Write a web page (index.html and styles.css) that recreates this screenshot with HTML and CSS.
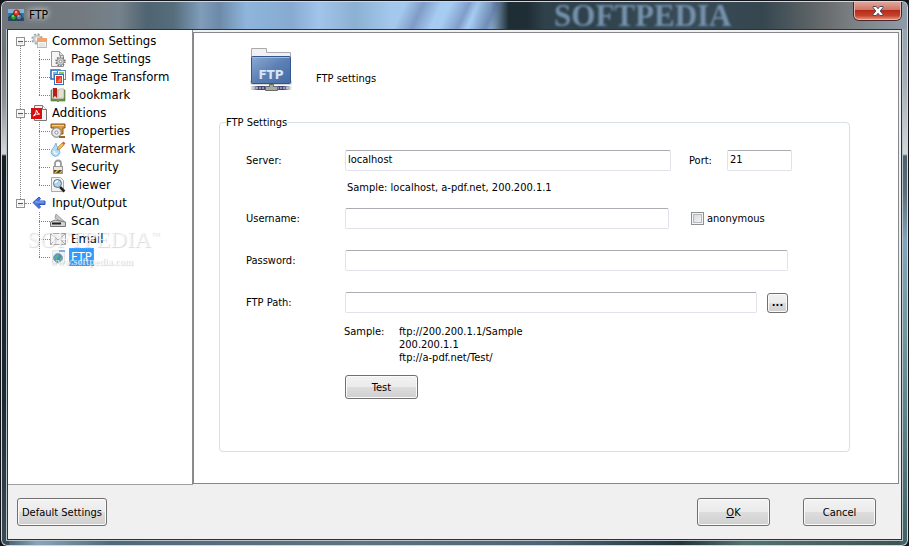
FILE: index.html
```
<!DOCTYPE html>
<html lang="en">
<head>
    <meta charset="UTF-8">
    <title>FTP</title>
    <meta name="viewport" content="width=device-width, initial-scale=1.0">
    <link rel="stylesheet" href="styles.css">
</head>
<body>
    <div class="window">
        <header class="titlebar">
            <svg class="app-icon" viewBox="0 0 16 12" aria-hidden="true">
                <rect width="16" height="12" fill="#3d6ea5"/>
                <rect width="16" height="4" fill="#79b4e0"/>
                <path d="M0 8l5-3 11 4v3H0z" fill="#27486b"/>
                <circle cx="5.500" cy="8" r="3" fill="#2fa32f" stroke="#0c3a10" stroke-width=".7"/>
                <circle cx="11" cy="8" r="3" fill="#5a7894" stroke="#172838" stroke-width=".7"/>
                <circle cx="8.500" cy="4" r="3" fill="#e23a28" stroke="#601008" stroke-width=".7"/>
                <circle cx="8" cy="3" r="1.200" fill="#ff9a88"/>
                <circle cx="5" cy="7" r="1" fill="#7fe07f"/>
                <circle cx="10.500" cy="7" r="1" fill="#a9c0d4"/>
            </svg>
            <h1 class="title">FTP</h1>
            <span class="glass-text" aria-hidden="true">SOFTPEDIA</span>
            <button class="close-btn" type="button" aria-label="Close">
                <svg viewBox="0 0 12 10" aria-hidden="true">
                    <path d="M1 .5h3.200L6 2.700 7.800.5H11v1L8.200 5 11 8.500v1H7.800L6 7.300 4.200 9.500H1v-1L3.800 5 1 1.500z" fill="#fff" stroke="#4a4e63"/>
                </svg>
            </button>
        </header>

        <div class="client">
            <div class="panes">
                <nav class="tree" aria-label="Settings">
                    <ul class="roots">
                        <li class="branch">
                            <div class="node">
                                <button class="toggle" type="button" aria-label="Collapse Common Settings"></button>
                                <svg class="icon" viewBox="0 0 16 16" aria-hidden="true">
                                    <circle cx="6" cy="6" r="4.700" fill="none" stroke="#a4a8aa" stroke-width="2" stroke-dasharray="2 1.700"/>
                                    <circle cx="6" cy="6" r="4" fill="#cfd2d4" stroke="#a8acae" stroke-width=".6"/>
                                    <circle cx="6" cy="6" r="1.500" fill="#fff"/>
                                    <rect x="6.500" y="5.500" width="9" height="9" fill="#f6f6f6" stroke="#b9b9b9"/>
                                    <rect x="6" y="5" width="10" height="4" fill="#f0a36a"/>
                                    <path d="M8 11h6M8 13h6" stroke="#d6d6d6"/>
                                </svg>
                                <a href="#common">Common Settings</a>
                            </div>
                            <ul class="leaves">
                                <li class="node leaf">
                                    <svg class="icon" viewBox="0 0 16 16" aria-hidden="true">
                                        <path d="M1.500.5h8l4 4v11h-12z" fill="#f5f5f5" stroke="#999"/>
                                        <path d="M9.500.5v4h4" fill="#ddd" stroke="#999"/>
                                        <circle cx="10.500" cy="10.500" r="4.200" fill="none" stroke="#777" stroke-width="2" stroke-dasharray="1.500 1.140"/>
                                        <circle cx="10.500" cy="10.500" r="3.500" fill="#d0d2d4" stroke="#8c8c8c" stroke-width=".8"/>
                                        <circle cx="10.500" cy="10.500" r="1.300" fill="#fff" stroke="#777" stroke-width=".7"/>
                                    </svg>
                                    <a href="#page">Page Settings</a>
                                </li>
                                <li class="node leaf">
                                    <svg class="icon" viewBox="0 0 16 16" aria-hidden="true">
                                        <rect x="1" y="1" width="9" height="9" fill="#fff" stroke="#2267b5" stroke-width="1.500"/>
                                        <rect x="3" y="3" width="6" height="6" fill="#7ab8ea"/>
                                        <rect x="7.500" y="1.500" width="8" height="9" fill="#fff" stroke="#4d90d6"/>
                                        <rect x="9" y="3" width="5" height="6" fill="#8fc84b"/>
                                        <rect x="4.500" y="5.500" width="9" height="10" fill="#fff" stroke="#2b73c2"/>
                                        <rect x="6" y="7" width="6" height="7" fill="#e8392a"/>
                                        <path d="M7 13l4-5v5z" fill="#f9885a"/>
                                    </svg>
                                    <a href="#image">Image Transform</a>
                                </li>
                                <li class="node leaf">
                                    <svg class="icon" viewBox="0 0 16 16" aria-hidden="true">
                                        <path d="M1 3h1v9h5l1 1 1-1h5V3h1v11H9l-1 1-1-1H1z" fill="#6d9a45" stroke="#47702a" stroke-width=".6"/>
                                        <path d="M2 2q4-1 6 1v9q-2-1-6-1z" fill="#f4f1e8" stroke="#a99" stroke-width=".6"/>
                                        <path d="M14 2q-4-1-6 1v9q2-1 6-1z" fill="#e6e1d3" stroke="#a99" stroke-width=".6"/>
                                        <path d="M3 1h4v10L5 9l-2 2z" fill="#b3201c"/>
                                    </svg>
                                    <a href="#bookmark">Bookmark</a>
                                </li>
                            </ul>
                        </li>
                        <li class="branch">
                            <div class="node">
                                <button class="toggle" type="button" aria-label="Collapse Additions"></button>
                                <svg class="icon" viewBox="0 0 16 16" aria-hidden="true">
                                    <path d="M3.500.5h8l4 4v11h-12z" fill="#f3f3f3" stroke="#777"/>
                                    <path d="M11.500.5v4h4" fill="#fff" stroke="#777"/>
                                    <rect y="3" width="11" height="11" fill="#d80f12"/>
                                    <path d="M2.500 11q3-3 3-6 1 4 3 4-3-.5-6 2" fill="none" stroke="#fff"/>
                                </svg>
                                <a href="#additions">Additions</a>
                            </div>
                            <ul class="leaves">
                                <li class="node leaf">
                                    <svg class="icon" viewBox="0 0 16 16" aria-hidden="true">
                                        <path d="M1 1h14v4h-2v6H4V5H1z" fill="#d99a45" stroke="#8a5416"/>
                                        <path d="M2 2.500h12" stroke="#f4cf8c"/>
                                        <circle cx="6.500" cy="9.500" r="4.800" fill="#dcdcdc" stroke="#777"/>
                                        <circle cx="6.500" cy="9.500" r="3" fill="none" stroke="#f2f2f2"/>
                                        <circle cx="6.500" cy="9.500" r="1.500" fill="#fff" stroke="#777" stroke-width=".7"/>
                                        <path d="M9 14h6" stroke="#9b631f" stroke-width="2"/>
                                    </svg>
                                    <a href="#properties">Properties</a>
                                </li>
                                <li class="node leaf">
                                    <svg class="icon" viewBox="0 0 16 16" aria-hidden="true">
                                        <path d="M6 2q0 3 3 6.500a4.300 4.300 0 1 1-7 0Q5 5 6 2z" fill="#b9dcf4" stroke="#6ba7d6" stroke-width=".8"/>
                                        <path d="M4 10q0 3 3 3" fill="none" stroke="#fff" stroke-width="1.200"/>
                                        <path d="M7 9l1-3 4-4 2 2-4 4z" fill="#f0bd57" stroke="#9c6f28" stroke-width=".6"/>
                                        <path d="M12 2l1.500-1.500L15.500 2.500 14 4z" fill="#de584b"/>
                                    </svg>
                                    <a href="#watermark">Watermark</a>
                                </li>
                                <li class="node leaf">
                                    <svg class="icon" viewBox="0 0 16 16" aria-hidden="true">
                                        <path d="M5 8V4.500a3 3 0 0 1 6 0V8" fill="none" stroke="#999" stroke-width="1.800"/>
                                        <rect x="3.500" y="7.500" width="9" height="7" fill="#4d4638" stroke="#999"/>
                                        <path d="M4 8h8v3H4z" fill="#ece7da"/>
                                        <path d="M4 14l3-3h2l-3 3zM9 14l3-3v2l-1 1z" fill="#e2b936"/>
                                    </svg>
                                    <a href="#security">Security</a>
                                </li>
                                <li class="node leaf">
                                    <svg class="icon" viewBox="0 0 16 16" aria-hidden="true">
                                        <path d="M1.500.5h9l3 3v11h-12z" fill="#f3f3f3" stroke="#aaa"/>
                                        <path d="M10 10l4.500 4.500" stroke="#222" stroke-width="2.500"/>
                                        <circle cx="7.500" cy="6.500" r="4" fill="#aed3ee" stroke="#66717a"/>
                                        <path d="M5 6q1-2 3-2" fill="none" stroke="#fff" stroke-width="1.500"/>
                                    </svg>
                                    <a href="#viewer">Viewer</a>
                                </li>
                            </ul>
                        </li>
                        <li class="branch">
                            <div class="node">
                                <button class="toggle" type="button" aria-label="Collapse Input/Output"></button>
                                <svg class="icon" viewBox="0 0 16 16" aria-hidden="true">
                                    <path d="M2 7.500l6-5.500 1.500 1.500L7.500 6H14v3.500H7.500l2 2.500L8 13.500z" fill="#4a7ae0" stroke="#2f57bd" stroke-linejoin="round"/>
                                    <path d="M4 7h9" stroke="#8eb0f4"/>
                                </svg>
                                <a href="#io">Input/Output</a>
                            </div>
                            <ul class="leaves">
                                <li class="node leaf">
                                    <svg class="icon" viewBox="0 0 16 16" aria-hidden="true">
                                        <path d="M6 1l9 8v2L5 5z" fill="#c8c8c8" stroke="#888" stroke-width=".7"/>
                                        <path d="M.5 9L5 7l10.500 2v4.500H.5z" fill="#d2d2d2" stroke="#777"/>
                                        <path d="M2 10.500h9" stroke="#222" stroke-width="2"/>
                                    </svg>
                                    <a href="#scan">Scan</a>
                                </li>
                                <li class="node leaf">
                                    <svg class="icon" viewBox="0 0 16 16" aria-hidden="true">
                                        <rect x=".5" y="2.500" width="15" height="11" fill="#f4f4f4" stroke="#aaa"/>
                                        <path d="M1 3l7 6 7-6M1 13l5-5M15 13l-5-5" fill="none" stroke="#aaa"/>
                                    </svg>
                                    <a href="#email">Email</a>
                                </li>
                                <li class="node leaf">
                                    <svg class="icon" viewBox="0 0 16 16" aria-hidden="true">
                                        <path d="M2.500 1.500h12v13h-12z" fill="#f1f2f3" stroke="#e4e4e4"/>
                                        <rect x="9" y="1" width="6" height="2" fill="#7faee0"/>
                                        <circle cx="8" cy="9" r="4.500" fill="#4a8fc0" stroke="#8aa9bb"/>
                                        <path d="M5 7l3-2 1 2-2 2v3l-2-2zM10 9l2-1v3l-2 1z" fill="#65b184"/>
                                    </svg>
                                    <a class="selected" href="#ftp" aria-current="page">FTP</a>
                                </li>
                            </ul>
                        </li>
                    </ul>
                    <div class="stamp" aria-hidden="true">
                        <span class="stamp-name">SOFTPEDIA<sup>™</sup></span>
                        <span class="stamp-url">www.softpedia.com</span>
                    </div>
                </nav>

                <main class="content">
                    <div class="heading">
                        <svg class="ftp-icon" viewBox="0 0 42 46" aria-hidden="true">
                            <defs>
                                <linearGradient id="folder" x1="0" y1="0" x2="1" y2="1">
                                    <stop offset="0" stop-color="#8dabd3"/>
                                    <stop offset=".5" stop-color="#5b80b4"/>
                                    <stop offset="1" stop-color="#426ca6"/>
                                </linearGradient>
                                <linearGradient id="cable" x1="0" y1="0" x2="1" y2="0">
                                    <stop offset="0" stop-color="#45456f" stop-opacity="0"/>
                                    <stop offset=".2" stop-color="#45456f"/>
                                    <stop offset=".8" stop-color="#45456f"/>
                                    <stop offset="1" stop-color="#45456f" stop-opacity="0"/>
                                </linearGradient>
                            </defs>
                            <rect y="33" width="42" height="5" rx="2" fill="#888" opacity=".35"/>
                            <path d="M1.500 11V1.500h15v4h24V11z" fill="#f1f1f1" stroke="#aaa"/>
                            <rect x="1.500" y="9.500" width="39" height="27" rx="1" fill="url(#folder)" stroke="#32568d"/>
                            <path d="M2.500 10.500h37" stroke="#a5bddd"/>
                            <rect y="39" width="42" height="4" fill="url(#cable)"/>
                            <path d="M3 41h36" stroke="#e4e4f0" stroke-dasharray="2 1"/>
                            <path d="M19.500 37.500h4v2h4v4h-12v-4h4z" fill="#a6a9a4" stroke="#686b66"/>
                            <text class="ftp-icon-text" x="21" y="32">FTP</text>
                        </svg>
                        <h2>FTP settings</h2>
                    </div>

                    <form>
                        <fieldset>
                            <legend>FTP Settings</legend>
                            <div class="row">
                                <label class="caption" for="server">Server:</label>
                                <input class="grow" id="server" type="text" value="localhost">
                                <label class="port-label" for="port">Port:</label>
                                <input class="port" id="port" type="text" value="21">
                            </div>
                            <p class="hint">Sample: localhost, a-pdf.net, 200.200.1.1</p>
                            <div class="row">
                                <label class="caption" for="username">Username:</label>
                                <input class="grow" id="username" type="text">
                                <label class="check"><input type="checkbox">anonymous</label>
                            </div>
                            <div class="row inset">
                                <label class="caption" for="password">Password:</label>
                                <input class="grow" id="password" type="password">
                            </div>
                            <div class="row inset">
                                <label class="caption" for="path">FTP Path:</label>
                                <input class="grow" id="path" type="text">
                                <button class="browse" type="button" aria-label="Browse">...</button>
                            </div>
                            <div class="samples">
                                <span>Sample:</span>
                                <p>ftp://200.200.1.1/Sample<br>200.200.1.1<br>ftp://a-pdf.net/Test/</p>
                            </div>
                            <button class="test" type="button">Test</button>
                        </fieldset>
                    </form>
                </main>
            </div>

            <footer class="actions">
                <button class="defaults" type="button">Default Settings</button>
                <button type="button"><u>O</u>K</button>
                <button type="button">Cancel</button>
            </footer>
        </div>
    </div>
</body>
</html>
```
FILE: styles.css
```
* {
    box-sizing: border-box;
}
body {
    margin: 0;
    background: #14161c;
    color: #000;
    font: 11px/13px "DejaVu Sans Condensed", Tahoma, sans-serif;
}
h1, h2, p, ul {
    margin: 0;
    padding: 0;
    font-size: inherit;
    font-weight: normal;
}
ul {
    list-style: none;
}
a {
    color: inherit;
    text-decoration: none;
}

/* Glass frame */
.window {
    display: flex;
    flex-direction: column;
    min-height: 100vh;
    padding: 0 6px 6px;
    border: 1px solid #14161c;
    border-radius: 7px;
    box-shadow: inset 0 0 0 1px #d0d8dd;
    background:
        linear-gradient(#70757a, #6f7478 50px, #8e9295 100px, #d2d4d5 150px, #d2d4d5 153px, #182026 155px, #1d2a31 400px, #3a4c56) left / 8px 100% no-repeat,
        linear-gradient(#8f9ca8, #a4aeb6 80px, #d4d6d7 153px, #4d616d 155px, #5a6d78 190px, #82a5bd 240px, #72989e 330px, #3f6262) right / 8px 100% no-repeat,
        linear-gradient(90deg, #3d5260, #87a6be 4%, #506b78 12%, #5b7480 40%, #4b6672 60%, #25343b 75%, #54736f 82%, #3a5350) bottom / 100% 9px no-repeat,
        #607480;
}
.titlebar {
    display: flex;
    align-items: flex-start;
    position: relative;
    height: 27px;
    margin: 1px -5px 0;
    padding-left: 6px;
    overflow: hidden;
    border-radius: 5px 5px 0 0;
    background:
        linear-gradient(115deg, transparent 44%, rgba(90, 110, 160, .5) 46%, transparent 48%, transparent 49%, rgba(90, 110, 160, .5) 51%, transparent 52%, rgba(80, 100, 150, .5) 54%, transparent 55%),
        linear-gradient(90deg, #70767b, #737b80 9%, #75828c 13%, #4f6471 16%, #566d7c 19%, #7f9dba 22%, #6d8aa8 24%, #8fb5dc 27%, #87aad0 32%, #a2c4ea 35%, #8cb0d2 39%, #a4c8ec 43%, #a8cdf4 52%, #8db0d0 54%, #1f2d35 56%, #1f2d35 58%, #2f424c 60%, #2f424c 65%, #384b57 76%, #35464f 84%, #686c6e 91%, #7b8084 94%, #8f9ca8);
}
.app-icon {
    width: 16px;
    height: 12px;
    margin-top: 7px;
}
.title {
    margin: 5px 0 0 5px;
    font-size: 12px;
    line-height: 16px;
    text-shadow: 0 0 5px #fff, 0 0 8px #ddd;
}
.glass-text {
    position: absolute;
    left: 61%;
    top: 0;
    color: #7592ac;
    font: bold 31px/27px "Liberation Serif", serif;
    filter: blur(1px);
}
.close-btn {
    display: flex;
    align-items: center;
    justify-content: center;
    width: 47px;
    height: 18px;
    min-width: 0;
    margin: 0 6px 0 auto;
    padding: 0;
    border: 1px solid #e6b5ac;
    border-top: 0;
    border-radius: 0 0 5px 5px;
    box-shadow: 0 0 0 1px #4b2527;
    background: linear-gradient(#dfa69b, #cf7464 48%, #b42b17 50%, #c4432d 80%, #e08a70);
}
.close-btn svg {
    width: 12px;
    height: 10px;
}

.client {
    display: flex;
    flex: 1;
    flex-direction: column;
    outline: 1px solid #b8c4ca;
    border: 1px solid #2a3338;
    background: #f0f0f0;
}
.panes {
    display: flex;
    flex: 1;
}

/* Tree */
.tree {
    position: relative;
    width: 185px;
    padding: 2px 0 0 8px;
    border-right: 1px solid #8a8c90;
    border-bottom: 1px solid #a0a0a0;
    background: #fff;
    font-size: 13px;
    line-height: 18px;
}
.branch {
    position: relative;
}
.branch:not(:last-child)::before {
    content: "";
    position: absolute;
    left: 4px;
    top: 9px;
    bottom: -9px;
    border-left: 1px dotted #808080;
}
.node {
    display: flex;
    align-items: center;
    position: relative;
    height: 18px;
}
.toggle {
    width: 9px;
    height: 9px;
    padding: 0;
    border: 1px solid #919191;
    border-radius: 0;
    background: linear-gradient(#3f5a9a, #3f5a9a) center / 5px 1px no-repeat, linear-gradient(#fff, #ddd);
}
.branch > .node::before {
    content: "";
    order: 1;
    width: 6px;
    border-top: 1px dotted #808080;
}
.branch > .node .icon,
.branch > .node a {
    order: 2;
}
.icon {
    width: 16px;
    height: 16px;
    margin-right: 3px;
}
.node a {
    padding: 0 2px;
}
.leaves {
    position: relative;
    padding-left: 23px;
}
.leaves::before {
    content: "";
    position: absolute;
    left: 23px;
    top: 0;
    bottom: 9px;
    border-left: 1px dotted #808080;
}
.leaf::before {
    content: "";
    width: 11px;
    border-top: 1px dotted #808080;
}
.node .selected {
    outline: 1px dotted #e08a2c;
    outline-offset: -1px;
    background: #3399ff;
    color: #fff;
}
.stamp {
    position: absolute;
    left: 19px;
    top: 192px;
    color: rgba(255, 255, 255, .7);
    text-shadow: 1px 1px 1px rgba(120, 120, 120, .3);
    pointer-events: none;
}
.stamp span {
    display: block;
}
.stamp-name {
    font: 23px/26px "Liberation Serif", serif;
}
.stamp-name sup {
    font-size: 9px;
    vertical-align: 9px;
}
.stamp-url {
    padding-left: 23px;
    font: bold 10px/18px "Liberation Serif", serif;
}

/* Settings pane */
.content {
    flex: 1;
    margin: 2px 2px 1px 0;
    padding: 14px 48px 31px 25px;
    border: 1px solid #85878c;
    background: #fff;
}
.heading {
    display: flex;
    align-items: center;
    padding-left: 31px;
    gap: 24px;
}
.heading h2 {
    margin-top: 16px;
}
.ftp-icon {
    width: 42px;
    height: 46px;
}
.ftp-icon-text {
    fill: #dbe5f3;
    font: bold 12px "DejaVu Sans", sans-serif;
    text-anchor: middle;
}
fieldset {
    min-width: 0;
    min-height: 336px;
    margin: 23px 0 0;
    padding: 21px 57px 0 26px;
    border: 1px solid #d5dfe5;
    border-radius: 4px;
}
legend {
    margin-left: -20px;
    padding: 0;
}
.row {
    display: flex;
    align-items: center;
    margin-bottom: 21px;
}
.inset {
    margin-right: 4px;
}
.caption {
    width: 99px;
}
input[type="text"],
input[type="password"] {
    min-width: 0;
    height: 21px;
    padding: 0 2px 2px;
    border: 1px solid #e2e3ea;
    border-top-color: #abadb3;
    border-radius: 2px;
    background: #fff;
    font: inherit;
}
.grow {
    flex: 1;
}
.port-label {
    width: 56px;
    padding-left: 18px;
}
.port {
    width: 65px;
}
.hint {
    margin: -11px 0 14px 101px;
}
.check {
    display: flex;
    align-items: center;
    width: 123px;
    padding-left: 22px;
    gap: 3px;
}
.check input {
    appearance: none;
    width: 13px;
    height: 13px;
    margin: 0;
    border: 1px solid #8e8f8f;
    box-shadow: inset 0 0 0 1px #f4f4f4, inset 0 0 0 2px #b5b9bd;
    background: linear-gradient(135deg, #cfd3d8, #fafafa);
}
button {
    min-width: 73px;
    height: 28px;
    border: 1px solid #707070;
    border-radius: 3px;
    box-shadow: inset 0 0 0 1px #fbfbfb;
    background: linear-gradient(#f2f2f2, #ebebeb 50%, #dddddd 50%, #cfcfcf);
    color: #000;
    font: inherit;
}
.browse,
.toggle {
    min-width: 0;
}
.browse {
    width: 21px;
    height: 20px;
    margin-left: 10px;
    padding: 0;
    font-weight: bold;
}
.samples {
    display: flex;
    margin: -9px 0 11px 98px;
}
.samples span {
    width: 55px;
}
.test {
    height: 24px;
    margin-left: 99px;
}

.actions {
    display: flex;
    align-items: center;
    gap: 33px;
    height: 54px;
    padding: 0 25px 0 9px;
}
.defaults {
    margin-right: auto;
    padding: 0 4px;
}
```
